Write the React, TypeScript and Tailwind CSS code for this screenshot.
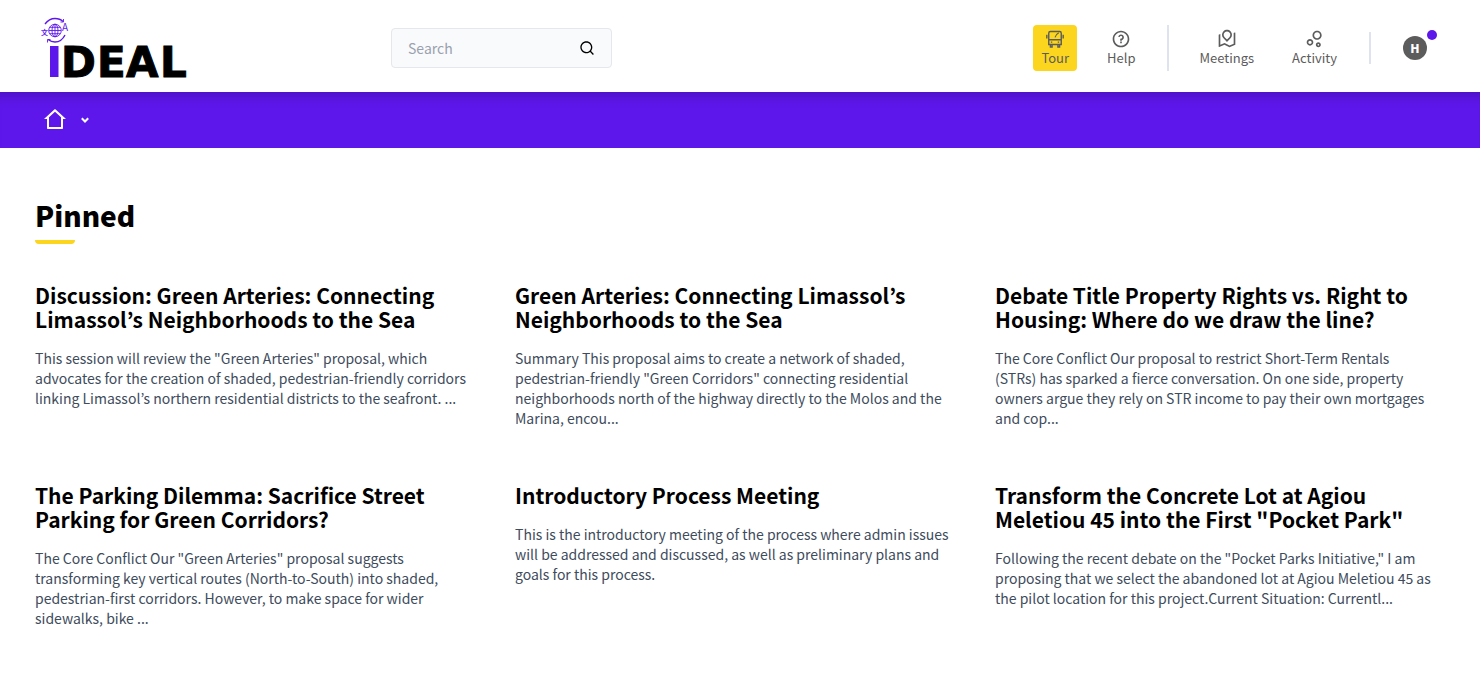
import {
  RiBubbleChartLine,
  RiHome2Line,
  RiQuestionLine,
  RiRoadMapLine,
  RiSearchLine,
} from "react-icons/ri";
import type { IconType } from "react-icons";

const pinned = [
  {
    title: "Discussion: Green Arteries: Connecting Limassol’s Neighborhoods to the Sea",
    text: 'This session will review the "Green Arteries" proposal, which advocates for the creation of shaded, pedestrian-friendly corridors linking Limassol’s northern residential districts to the seafront. ...',
  },
  {
    title: "Green Arteries: Connecting Limassol’s Neighborhoods to the Sea",
    text: 'Summary This proposal aims to create a network of shaded, pedestrian-friendly "Green Corridors" connecting residential neighborhoods north of the highway directly to the Molos and the Marina, encou...',
  },
  {
    title: "Debate Title Property Rights vs. Right to Housing: Where do we draw the line?",
    text: "The Core Conflict Our proposal to restrict Short-Term Rentals (STRs) has sparked a fierce conversation. On one side, property owners argue they rely on STR income to pay their own mortgages and cop...",
  },
  {
    title: "The Parking Dilemma: Sacrifice Street Parking for Green Corridors?",
    text: 'The Core Conflict Our "Green Arteries" proposal suggests transforming key vertical routes (North-to-South) into shaded, pedestrian-first corridors. However, to make space for wider sidewalks, bike ...',
  },
  {
    title: "Introductory Process Meeting",
    text: "This is the introductory meeting of the process where admin issues will be addressed and discussed, as well as preliminary plans and goals for this process.",
  },
  {
    title: 'Transform the Concrete Lot at Agiou Meletiou 45 into the First "Pocket Park"',
    text: 'Following the recent debate on the "Pocket Parks Initiative," I am proposing that we select the abandoned lot at Agiou Meletiou 45 as the pilot location for this project.Current Situation: Currentl...',
  },
];

function Logo() {
  return (
    <svg width="150" height="76" viewBox="0 -6 150 76" role="img" aria-label="iDEAL">
      <g fill="none" stroke="#5e17eb" strokeWidth="0.9">
        <circle cx="15" cy="14.5" r="6.3" />
        <ellipse cx="15" cy="14.5" rx="3" ry="6.3" />
        <path d="M15 8v13M9 14.5h12M10 11.3h10M10 17.7h10" />
        <path d="M5 8C8 4 11 2.500 15 2.500c4 0 6 1 8 3M25 19c-2 4-6 7-10 7-3 0-5-1-7-2.500" strokeWidth="1.4" />
        <path d="M23.500 3v3h-3M7.500 26.500v-3h3" />
      </g>
      <g fill="#5e17eb" fontFamily="'Noto Sans CJK SC', sans-serif">
        <text x="1" y="19" fontSize="7" fontWeight="700">文</text>
        <text x="22" y="15" fontSize="10">A</text>
      </g>
      <path d="M10 30h8.500v31H10z" fill="#5e17eb" />
      <text
        x="21"
        y="60.500"
        fontSize="42"
        fontWeight="700"
        fontFamily="'DejaVu Sans', sans-serif"
        stroke="#000"
        strokeWidth="1"
      >
        <tspan>D</tspan>
        <tspan x="57">E</tspan>
        <tspan x="86">A</tspan>
        <tspan x="120">L</tspan>
      </text>
    </svg>
  );
}

function BusIcon() {
  return (
    <svg
      width="20"
      height="20"
      viewBox="0 0 24 24"
      fill="none"
      stroke="currentColor"
      strokeWidth="1.700"
      aria-hidden="true"
    >
      <path d="M4.500 18.500V5a2 2 0 0 1 2-2h11a2 2 0 0 1 2 2v13.500zM4.500 12.800h15" />
      <path d="M2.200 7v4.500M21.800 7v4.500" />
      <path d="M6.500 19v2.500h2V19M15.500 19v2.500h2V19" />
      <path d="M12 10c1-3 2-4 4.500-5.500" strokeWidth="1.300" />
      <path d="M7 15.700h1.700M15.300 15.700H17" />
    </svg>
  );
}

function NavLink({ icon: Icon, label }: { icon: IconType; label: string }) {
  return (
    <a href="#" className="flex flex-col items-center rounded px-2 py-1 text-[#5c5c5c]">
      <Icon size={20} />
      <span className="text-[13px] leading-[18px]">{label}</span>
    </a>
  );
}

export default function App() {
  return (
    <div className="min-h-screen bg-white font-['Noto_Sans_CJK_KR',sans-serif] text-black">
      <header className="flex h-[92px] items-center px-10 pt-1">
        <a href="#" className="shrink-0">
          <Logo />
        </a>
        <form className="ml-[201px] flex h-10 w-[221px] items-center rounded border border-gray-200 bg-gray-50 px-4">
          <input
            type="search"
            placeholder="Search"
            aria-label="Search"
            className="min-w-0 flex-1 text-[14px] outline-none placeholder:text-gray-400"
          />
          <button type="submit" aria-label="Search">
            <RiSearchLine size={16} />
          </button>
        </form>

        <nav className="mr-[13px] ml-auto flex items-center">
          <button
            type="button"
            className="mr-[22px] flex flex-col items-center rounded bg-[#fbd51e] px-2 py-1 text-[#5c5c5c]"
          >
            <BusIcon />
            <span className="text-[13px] leading-[18px]">Tour</span>
          </button>
          <NavLink icon={RiQuestionLine} label="Help" />
          <div className="mr-[22px] ml-6 h-[46px] w-[2px] bg-[#dfe3f0]" />
          <NavLink icon={RiRoadMapLine} label="Meetings" />
          <div className="ml-[22px]">
            <NavLink icon={RiBubbleChartLine} label="Activity" />
          </div>
          <div className="mr-8 ml-6 h-8 w-[2px] bg-[#dfe3f0]" />
          <button
            type="button"
            aria-label="Account"
            className="relative flex h-6 w-6 items-center justify-center rounded-full bg-[#5c5c5c] text-[12px] font-black text-white"
          >
            H
            <span className="absolute -top-1.5 -right-2.5 h-2.5 w-2.5 rounded-full bg-[#5e17eb]" />
          </button>
        </nav>
      </header>

      <div className="flex h-14 items-center gap-3 bg-[#5e17eb] px-[43px] text-white shadow-[inset_0_14px_14px_-12px_rgba(0,0,0,0.25)]">
        <a href="#" aria-label="Home">
          <RiHome2Line size={24} />
        </a>
        <button type="button" aria-label="Open menu">
          <svg width="12" height="12" viewBox="0 0 12 12" fill="none" stroke="currentColor" strokeWidth="2">
            <path d="M2.800 4.300 6 7.500l3.200-3.200" />
          </svg>
        </button>
      </div>

      <main className="px-[35px] pt-[47px]">
        <h1 className="text-[28px] leading-10 font-black">Pinned</h1>
        <div className="mt-[5px] h-1 w-10 rounded-b bg-[#fbd51e]" />
        <div className="mt-[39px] grid grid-cols-3 gap-x-[30px] gap-y-[55px]">
          {pinned.map((item) => (
            <article key={item.title}>
              <h2 className="text-[21px] leading-6 font-semibold">
                <a href="#">{item.title}</a>
              </h2>
              <p className="mt-[17px] pr-3 text-[14px] leading-5 text-[#3e4c5c]">{item.text}</p>
            </article>
          ))}
        </div>
      </main>
    </div>
  );
}
